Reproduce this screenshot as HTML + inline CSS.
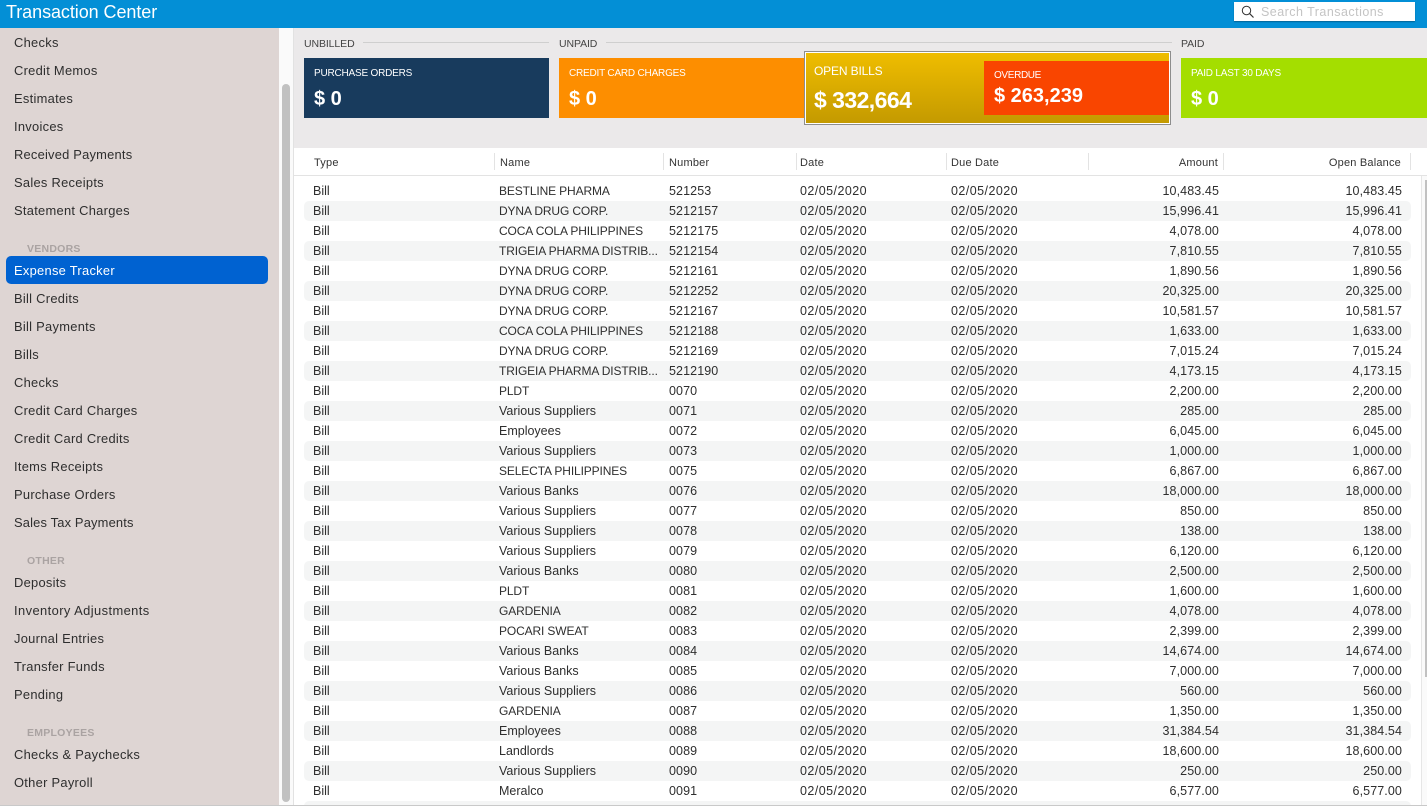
<!DOCTYPE html>
<html><head><meta charset="utf-8"><style>
html,body{margin:0;padding:0;width:1427px;height:806px;overflow:hidden;background:#fff;font-family:"Liberation Sans",sans-serif;color:#2a2a2a}
div,span{position:absolute;white-space:nowrap;box-sizing:border-box}
#top{left:0;top:0;width:1427px;height:28px;background:#038fd6}
#title{left:6px;top:0;height:24px;line-height:24px;font-size:18px;letter-spacing:-.07px;color:#fff}
#search{left:1234px;top:2px;width:181px;height:19px;background:#fff;box-shadow:0 1px 1px rgba(0,0,0,.3)}
#search span{left:27px;top:0;line-height:20px;font-size:12.5px;color:#c4c4c4;letter-spacing:.47px}
#side{left:0;top:28px;width:279px;height:777px;background:#ded5d3}
#gutter{left:279px;top:28px;width:15px;height:777px;background:#fafafa;border-right:1px solid #e2e2e2}
#thumb{left:282px;top:84px;width:8px;height:718px;border-radius:4px;background:#c1c1c1}
.s{left:14px;height:20px;line-height:20px;font-size:12.9px;letter-spacing:.28px;color:#2e2e2e}
.h{left:27px;height:14px;line-height:14px;font-size:10.5px;font-weight:bold;letter-spacing:.25px;color:#aaa3a2}
#sel{left:6px;top:256px;width:262px;height:28px;border-radius:5px;background:#0062d1}
#band{left:294px;top:28px;width:1133px;height:120px;background:#ebe9ea}
.l{height:14px;line-height:14px;font-size:10.5px;top:37px;color:#444;letter-spacing:-.1px}
.ln{height:1px;background:#cfcfcf;top:42px}
.c{color:#fff;top:58px;height:60px}
.c .t{left:10px;top:8px;font-size:10px;line-height:13px;letter-spacing:-.2px;margin-top:1px}
.c .v{left:10px;top:29px;font-size:20px;line-height:24px;font-weight:bold}
#ob{left:804px;top:51px;width:367px;height:74px;border:1px solid #8d8d8d;z-index:3}
#obi{left:0;top:0;width:365px;height:72px;border:1px solid #fff;background:linear-gradient(#efbd00,#c49a00)}
#obi .t{left:8px;top:11px;font-size:12px;color:#fff;line-height:15px;letter-spacing:-.15px}
#obi .v{left:8px;top:33px;font-size:23px;font-weight:bold;color:#fff;line-height:28px;letter-spacing:-.55px}
#od{left:178px;top:8px;width:185px;height:54px;background:#f94500}
#od .t{left:10px;top:8px;font-size:10px;color:#fff;line-height:14px;letter-spacing:-.35px}
#od .v{left:10px;top:22px;font-size:20px;font-weight:bold;color:#fff;line-height:26px;letter-spacing:0}
#hd{left:294px;top:148px;width:1133px;height:28px;border-bottom:1px solid #e3e3e3;background:#fff}
.th{top:8px;line-height:14px;font-size:11px;letter-spacing:.2px;color:#333}
.sp{top:5px;width:1px;height:17px;background:#e3e3e3}
#tb{left:294px;top:176px;width:1127px;height:629px;overflow:hidden;background:#fff}
.r{left:10px;width:1107px;height:20px;line-height:20px;font-size:12.5px;color:#2e2e2e}
.r.z{background:#f4f5f5;border-radius:5px}
.r span{top:0}
.r span:nth-child(1){left:9px}
.r span:nth-child(2){left:195px}
.r span:nth-child(3){left:365px;letter-spacing:.1px}
.r span:nth-child(4){left:496px;letter-spacing:.45px}
.r span:nth-child(5){left:647px;letter-spacing:.45px}
.r span:nth-child(6){right:192px;letter-spacing:.1px}
.r span:nth-child(7){right:9px;letter-spacing:.1px}
.r span.n{font-size:12px;letter-spacing:-.13px}
#sbt{left:1421px;top:176px;width:6px;height:629px;background:#fafafa;border-left:1px solid #e6e6e6}
#sbh{left:1425px;top:180px;width:2px;height:497px;background:#c1c1c1}
#bot{left:0;top:805px;width:1427px;height:1px;background:#c9c9c9}
</style></head><body>
<div id="top"></div>
<div id="title">Transaction Center</div>
<div id="search"><svg style="position:absolute;left:7px;top:3px" width="14" height="14" viewBox="0 0 14 14"><circle cx="5.5" cy="5.5" r="4.2" fill="none" stroke="#333" stroke-width="1"/><path d="M8.6 8.6L12.5 12.5" stroke="#333" stroke-width="1.2"/></svg><span>Search Transactions</span></div>
<div id="side"></div>
<div id="sel"></div>
<div class="s" style="top:33px">Checks</div>
<div class="s" style="top:61px">Credit Memos</div>
<div class="s" style="top:89px">Estimates</div>
<div class="s" style="top:117px">Invoices</div>
<div class="s" style="top:145px;letter-spacing:.22px">Received Payments</div>
<div class="s" style="top:173px">Sales Receipts</div>
<div class="s" style="top:201px">Statement Charges</div>
<div class="h" style="top:242px">VENDORS</div>
<div class="s" style="top:261px;color:#fff">Expense Tracker</div>
<div class="s" style="top:289px">Bill Credits</div>
<div class="s" style="top:317px">Bill Payments</div>
<div class="s" style="top:345px">Bills</div>
<div class="s" style="top:373px">Checks</div>
<div class="s" style="top:401px">Credit Card Charges</div>
<div class="s" style="top:429px">Credit Card Credits</div>
<div class="s" style="top:457px">Items Receipts</div>
<div class="s" style="top:485px">Purchase Orders</div>
<div class="s" style="top:513px;letter-spacing:.17px">Sales Tax Payments</div>
<div class="h" style="top:554px">OTHER</div>
<div class="s" style="top:573px">Deposits</div>
<div class="s" style="top:601px;letter-spacing:.42px">Inventory Adjustments</div>
<div class="s" style="top:629px">Journal Entries</div>
<div class="s" style="top:657px">Transfer Funds</div>
<div class="s" style="top:685px">Pending</div>
<div class="h" style="top:726px">EMPLOYEES</div>
<div class="s" style="top:745px">Checks &amp; Paychecks</div>
<div class="s" style="top:773px">Other Payroll</div>
<div id="gutter"></div>
<div id="thumb"></div>
<div id="band"></div>
<div class="l" style="left:304px">UNBILLED</div>
<div class="ln" style="left:363px;width:186px"></div>
<div class="l" style="left:559px">UNPAID</div>
<div class="ln" style="left:606px;width:566px"></div>
<div class="l" style="left:1181px">PAID</div>
<div class="c" style="left:304px;width:245px;background:#183b5d"><span class="t">PURCHASE ORDERS</span><span class="v">$ 0</span></div>
<div class="c" style="left:559px;width:246px;background:#fd8e00"><span class="t">CREDIT CARD CHARGES</span><span class="v">$ 0</span></div>
<div id="ob"><div id="obi"><span class="t">OPEN BILLS</span><span class="v">$ 332,664</span><div id="od"><span class="t">OVERDUE</span><span class="v">$ 263,239</span></div></div></div>
<div class="c" style="left:1181px;width:246px;background:#a4de00"><span class="t">PAID LAST 30 DAYS</span><span class="v">$ 0</span></div>
<div id="hd">
<span class="th" style="left:20px">Type</span><span class="sp" style="left:200px"></span>
<span class="th" style="left:206px">Name</span><span class="sp" style="left:369px"></span>
<span class="th" style="left:375px">Number</span><span class="sp" style="left:502px"></span>
<span class="th" style="left:506px">Date</span><span class="sp" style="left:652px"></span>
<span class="th" style="left:657px">Due Date</span><span class="sp" style="left:794px"></span>
<span class="th" style="right:209px">Amount</span><span class="sp" style="left:929px"></span>
<span class="th" style="right:26px">Open Balance</span><span class="sp" style="left:1116px"></span>
</div>
<div id="tb">
<div class="r" style="top:5px"><span>Bill</span><span class="n">BESTLINE PHARMA</span><span>521253</span><span>02/05/2020</span><span>02/05/2020</span><span>10,483.45</span><span>10,483.45</span></div>
<div class="r z" style="top:25px"><span>Bill</span><span class="n">DYNA DRUG CORP.</span><span>5212157</span><span>02/05/2020</span><span>02/05/2020</span><span>15,996.41</span><span>15,996.41</span></div>
<div class="r" style="top:45px"><span>Bill</span><span class="n">COCA COLA PHILIPPINES</span><span>5212175</span><span>02/05/2020</span><span>02/05/2020</span><span>4,078.00</span><span>4,078.00</span></div>
<div class="r z" style="top:65px"><span>Bill</span><span class="n">TRIGEIA PHARMA DISTRIB...</span><span>5212154</span><span>02/05/2020</span><span>02/05/2020</span><span>7,810.55</span><span>7,810.55</span></div>
<div class="r" style="top:85px"><span>Bill</span><span class="n">DYNA DRUG CORP.</span><span>5212161</span><span>02/05/2020</span><span>02/05/2020</span><span>1,890.56</span><span>1,890.56</span></div>
<div class="r z" style="top:105px"><span>Bill</span><span class="n">DYNA DRUG CORP.</span><span>5212252</span><span>02/05/2020</span><span>02/05/2020</span><span>20,325.00</span><span>20,325.00</span></div>
<div class="r" style="top:125px"><span>Bill</span><span class="n">DYNA DRUG CORP.</span><span>5212167</span><span>02/05/2020</span><span>02/05/2020</span><span>10,581.57</span><span>10,581.57</span></div>
<div class="r z" style="top:145px"><span>Bill</span><span class="n">COCA COLA PHILIPPINES</span><span>5212188</span><span>02/05/2020</span><span>02/05/2020</span><span>1,633.00</span><span>1,633.00</span></div>
<div class="r" style="top:165px"><span>Bill</span><span class="n">DYNA DRUG CORP.</span><span>5212169</span><span>02/05/2020</span><span>02/05/2020</span><span>7,015.24</span><span>7,015.24</span></div>
<div class="r z" style="top:185px"><span>Bill</span><span class="n">TRIGEIA PHARMA DISTRIB...</span><span>5212190</span><span>02/05/2020</span><span>02/05/2020</span><span>4,173.15</span><span>4,173.15</span></div>
<div class="r" style="top:205px"><span>Bill</span><span class="n">PLDT</span><span>0070</span><span>02/05/2020</span><span>02/05/2020</span><span>2,200.00</span><span>2,200.00</span></div>
<div class="r z" style="top:225px"><span>Bill</span><span>Various Suppliers</span><span>0071</span><span>02/05/2020</span><span>02/05/2020</span><span>285.00</span><span>285.00</span></div>
<div class="r" style="top:245px"><span>Bill</span><span>Employees</span><span>0072</span><span>02/05/2020</span><span>02/05/2020</span><span>6,045.00</span><span>6,045.00</span></div>
<div class="r z" style="top:265px"><span>Bill</span><span>Various Suppliers</span><span>0073</span><span>02/05/2020</span><span>02/05/2020</span><span>1,000.00</span><span>1,000.00</span></div>
<div class="r" style="top:285px"><span>Bill</span><span class="n">SELECTA PHILIPPINES</span><span>0075</span><span>02/05/2020</span><span>02/05/2020</span><span>6,867.00</span><span>6,867.00</span></div>
<div class="r z" style="top:305px"><span>Bill</span><span>Various Banks</span><span>0076</span><span>02/05/2020</span><span>02/05/2020</span><span>18,000.00</span><span>18,000.00</span></div>
<div class="r" style="top:325px"><span>Bill</span><span>Various Suppliers</span><span>0077</span><span>02/05/2020</span><span>02/05/2020</span><span>850.00</span><span>850.00</span></div>
<div class="r z" style="top:345px"><span>Bill</span><span>Various Suppliers</span><span>0078</span><span>02/05/2020</span><span>02/05/2020</span><span>138.00</span><span>138.00</span></div>
<div class="r" style="top:365px"><span>Bill</span><span>Various Suppliers</span><span>0079</span><span>02/05/2020</span><span>02/05/2020</span><span>6,120.00</span><span>6,120.00</span></div>
<div class="r z" style="top:385px"><span>Bill</span><span>Various Banks</span><span>0080</span><span>02/05/2020</span><span>02/05/2020</span><span>2,500.00</span><span>2,500.00</span></div>
<div class="r" style="top:405px"><span>Bill</span><span class="n">PLDT</span><span>0081</span><span>02/05/2020</span><span>02/05/2020</span><span>1,600.00</span><span>1,600.00</span></div>
<div class="r z" style="top:425px"><span>Bill</span><span class="n">GARDENIA</span><span>0082</span><span>02/05/2020</span><span>02/05/2020</span><span>4,078.00</span><span>4,078.00</span></div>
<div class="r" style="top:445px"><span>Bill</span><span class="n">POCARI SWEAT</span><span>0083</span><span>02/05/2020</span><span>02/05/2020</span><span>2,399.00</span><span>2,399.00</span></div>
<div class="r z" style="top:465px"><span>Bill</span><span>Various Banks</span><span>0084</span><span>02/05/2020</span><span>02/05/2020</span><span>14,674.00</span><span>14,674.00</span></div>
<div class="r" style="top:485px"><span>Bill</span><span>Various Banks</span><span>0085</span><span>02/05/2020</span><span>02/05/2020</span><span>7,000.00</span><span>7,000.00</span></div>
<div class="r z" style="top:505px"><span>Bill</span><span>Various Suppliers</span><span>0086</span><span>02/05/2020</span><span>02/05/2020</span><span>560.00</span><span>560.00</span></div>
<div class="r" style="top:525px"><span>Bill</span><span class="n">GARDENIA</span><span>0087</span><span>02/05/2020</span><span>02/05/2020</span><span>1,350.00</span><span>1,350.00</span></div>
<div class="r z" style="top:545px"><span>Bill</span><span>Employees</span><span>0088</span><span>02/05/2020</span><span>02/05/2020</span><span>31,384.54</span><span>31,384.54</span></div>
<div class="r" style="top:565px"><span>Bill</span><span>Landlords</span><span>0089</span><span>02/05/2020</span><span>02/05/2020</span><span>18,600.00</span><span>18,600.00</span></div>
<div class="r z" style="top:585px"><span>Bill</span><span>Various Suppliers</span><span>0090</span><span>02/05/2020</span><span>02/05/2020</span><span>250.00</span><span>250.00</span></div>
<div class="r" style="top:605px"><span>Bill</span><span>Meralco</span><span>0091</span><span>02/05/2020</span><span>02/05/2020</span><span>6,577.00</span><span>6,577.00</span></div>
<div class="r z" style="top:625px"></div>
</div>
<div id="sbt"></div>
<div id="sbh"></div>
<div id="bot"></div>
</body></html>
